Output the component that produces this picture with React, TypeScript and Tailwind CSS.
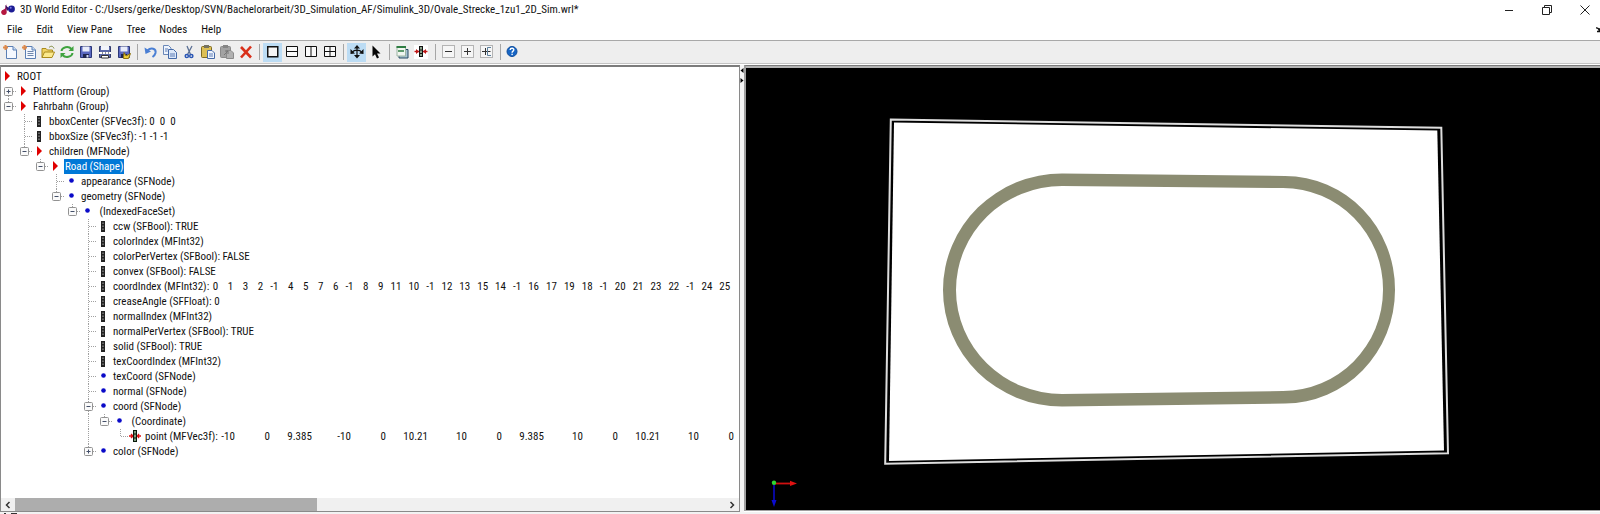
import React, { useState } from 'react';
import clsx from 'clsx';

type IconKind = 'node' | 'slot' | 'field' | 'event';

interface TreeNode {
  label: string;
  icon: IconKind;
  open?: boolean;
  indices?: number[];
  points?: number[];
  children?: TreeNode[];
}

const COORD_INDEX = [
  0, 1, 3, 2, -1, 4, 5, 7, 6, -1, 8, 9, 11, 10, -1, 12, 13, 15, 14, -1,
  16, 17, 19, 18, -1, 20, 21, 23, 22, -1, 24, 25,
];
const POINTS = [-10, 0, 9.385, -10, 0, 10.21, 10, 0, 9.385, 10, 0, 10.21, 10, 0];

// x, y, z columns of a point list
const pointCols = ['w-[39px]', 'w-[35px]', 'w-[42px]'];

const field = (label: string): TreeNode => ({ label, icon: 'field' });

const scene: TreeNode[] = [
  { label: 'Plattform (Group)', icon: 'node', children: [] },
  {
    label: 'Fahrbahn (Group)',
    icon: 'node',
    open: true,
    children: [
      field('bboxCenter (SFVec3f): 0  0  0'),
      field('bboxSize (SFVec3f): -1 -1 -1'),
      {
        label: 'children (MFNode)',
        icon: 'node',
        open: true,
        children: [
          {
            label: 'Road (Shape)',
            icon: 'node',
            open: true,
            children: [
              { label: 'appearance (SFNode)', icon: 'slot' },
              {
                label: 'geometry (SFNode)',
                icon: 'slot',
                open: true,
                children: [
                  {
                    label: ' (IndexedFaceSet)',
                    icon: 'slot',
                    open: true,
                    children: [
                      field('ccw (SFBool): TRUE'),
                      field('colorIndex (MFInt32)'),
                      field('colorPerVertex (SFBool): FALSE'),
                      field('convex (SFBool): FALSE'),
                      { label: 'coordIndex (MFInt32):', icon: 'field', indices: COORD_INDEX },
                      field('creaseAngle (SFFloat): 0'),
                      field('normalIndex (MFInt32)'),
                      field('normalPerVertex (SFBool): TRUE'),
                      field('solid (SFBool): TRUE'),
                      field('texCoordIndex (MFInt32)'),
                      { label: 'texCoord (SFNode)', icon: 'slot' },
                      { label: 'normal (SFNode)', icon: 'slot' },
                      {
                        label: 'coord (SFNode)',
                        icon: 'slot',
                        open: true,
                        children: [
                          {
                            label: ' (Coordinate)',
                            icon: 'slot',
                            open: true,
                            children: [{ label: 'point (MFVec3f):', icon: 'event', points: POINTS }],
                          },
                        ],
                      },
                      { label: 'color (SFNode)', icon: 'slot', children: [] },
                    ],
                  },
                ],
              },
            ],
          },
        ],
      },
    ],
  },
];

/* ---------- tree ---------- */

const NodeIcon: React.FC<{ kind: IconKind }> = ({ kind }) => (
  <svg width="16" height="15" viewBox="0 0 16 15" className="shrink-0" aria-hidden="true">
    {kind === 'node' && <path d="M5 2 L10 7 L5 12 Z" fill="#e00000" />}
    {kind === 'slot' && <circle cx="7.5" cy="6.5" r="2.3" fill="#0a0ac8" />}
    {kind === 'field' && (
      <>
        <rect x="5" y="2" width="4" height="11" fill="#222" />
        <path d="M7 3.5 V12" stroke="#aaa" strokeDasharray="1.5 1.5" />
      </>
    )}
    {kind === 'event' && (
      <>
        <path d="M1 7 H13 M3 5 L5 7 L3 9 M11 5 L9.5 7 L11 9" stroke="#d11" strokeWidth="1.3" fill="none" />
        <rect x="5.5" y="1.5" width="3" height="11" fill="#7d9a7d" stroke="#0a1a0a" />
        <path d="M5.5 5 H8.5 M5.5 9 H8.5" stroke="#0a1a0a" />
      </>
    )}
  </svg>
);

// dotted connector for one indent level
const Guide: React.FC<{ up?: boolean; down?: boolean; right?: boolean }> = ({ up, down, right }) => (
  <svg width="16" height="15" viewBox="0 0 16 15" className="shrink-0" aria-hidden="true">
    <g stroke="#a0a0a0" strokeDasharray="1 1" fill="none">
      {up && <path d="M8.5 0 V8" />}
      {down && <path d="M8.5 8 V15" />}
      {right && <path d="M9 7.5 H16" />}
    </g>
  </svg>
);

interface TreeProps {
  guides: boolean[];
  selected: string;
  onSelect: (label: string) => void;
}

interface RowProps extends TreeProps {
  node: TreeNode;
  last: boolean;
  first: boolean;
}

const TreeRow: React.FC<RowProps> = ({ node, guides, last, first, selected, onSelect }) => {
  const [open, setOpen] = useState(!!node.open);
  const isTop = guides.length === 0 && first;

  return (
    <li>
      <div className="flex h-[15px] items-center">
        {guides.map((g, i) => (
          <Guide key={i} up={g} down={g} />
        ))}
        {node.children ? (
          <button type="button" aria-label={open ? 'Collapse' : 'Expand'} onClick={() => setOpen(!open)} className="shrink-0">
            <svg width="16" height="15" viewBox="0 0 16 15" className="block">
              <g stroke="#a0a0a0" strokeDasharray="1 1">
                {!isTop && <path d="M8.5 0 V4" />}
                {!last && <path d="M8.5 12 V15" />}
                <path d="M13 7.5 H16" />
              </g>
              <rect x="4.5" y="3.5" width="8" height="8" rx="1" fill="#fafafa" stroke="#929292" />
              <path d="M6.5 7.5 H10.5" stroke="#44506a" />
              {!open && <path d="M8.5 5.5 V9.5" stroke="#44506a" />}
            </svg>
          </button>
        ) : (
          <Guide up down={!last} right />
        )}
        <NodeIcon kind={node.icon} />
        <button
          type="button"
          onClick={() => onSelect(node.label)}
          className={clsx(
            'h-[15px] shrink-0 whitespace-pre px-px text-left leading-[15px]',
            selected === node.label && 'bg-[#0078d7] text-white',
          )}
        >
          {node.label}
        </button>
        {node.indices && (
          <div className="flex shrink-0 gap-[7px] leading-[15px]">
            {node.indices.map((n, i) => (
              <span key={i} className="min-w-2 text-right">{n}</span>
            ))}
          </div>
        )}
        {node.points && (
          <div className="flex shrink-0 leading-[15px]">
            {node.points.map((n, i) => (
              <span key={i} className={clsx('text-right', i === 0 ? 'w-4' : pointCols[i % 3])}>{n}</span>
            ))}
          </div>
        )}
      </div>
      {open && node.children && (
        <TreeList nodes={node.children} guides={[...guides, !last]} selected={selected} onSelect={onSelect} />
      )}
    </li>
  );
};

const TreeList: React.FC<TreeProps & { nodes: TreeNode[] }> = ({ nodes, guides, selected, onSelect }) => (
  <ul>
    {nodes.map((n, i) => (
      <TreeRow
        key={n.label}
        node={n}
        guides={guides}
        first={i === 0}
        last={i === nodes.length - 1}
        selected={selected}
        onSelect={onSelect}
      />
    ))}
  </ul>
);

/* ---------- toolbar ---------- */

const page = (
  <>
    <path d="M4.5 2.5 H11 L14.5 6 V14.5 H4.5 Z" fill="#f4f8ff" stroke="#5b7fb4" />
    <path d="M11 2.5 V6 H14.5" fill="#c9dbf2" stroke="#5b7fb4" />
    <path d="M1 3.5 H6 M3.5 1 V6" stroke="#e08a4a" strokeWidth="2" />
  </>
);

const floppy = (
  <>
    <path d="M2.5 2.5 H13.5 V13.5 H2.5 Z" fill="#5a68c0" stroke="#2c3777" />
    <rect x="4.5" y="2.5" width="7" height="5" fill="#e8ecfa" />
    <rect x="5" y="10" width="6" height="4" fill="#1f2650" />
    <rect x="8.5" y="11" width="2" height="2.5" fill="#d6dcf5" />
  </>
);

const boxed = (
  <rect x="1.5" y="1.5" width="12" height="12" fill="#f6f6f6" stroke="#b4b4b4" />
);

interface Tool {
  name: string;
  art: React.ReactNode;
  active?: boolean;
}

const toolGroups: Tool[][] = [
  [
    { name: 'New', art: page },
    {
      name: 'New from template',
      art: (
        <>
          {page}
          <path d="M6.5 7.5 H12.5 M6.5 9.5 H12.5 M6.5 11.5 H12.5" stroke="#6f87ac" />
        </>
      ),
    },
    {
      name: 'Open',
      art: (
        <>
          <path d="M2 13.5 V4.5 H6 L7.5 6 H12.5 V8" fill="#f0d264" stroke="#a98a1c" />
          <path d="M2 13.5 L4.5 8 H14.5 L12 13.5 Z" fill="#fbe98d" stroke="#a98a1c" />
          <path d="M9 3.5 C11 1.5 13 2 14 4.5" fill="none" stroke="#7d8a3c" />
        </>
      ),
    },
    {
      name: 'Revert',
      art: (
        <>
          <path d="M2.5 7 C3 3 9.5 1.5 12.5 5" fill="none" stroke="#3fa33f" strokeWidth="2" />
          <path d="M13.5 9 C13 13 6.5 14.5 3.5 11" fill="none" stroke="#3fa33f" strokeWidth="2" />
          <path d="M14.5 2 V7 H9.5 Z M1.5 14 V9 H6.5 Z" fill="#3fa33f" />
        </>
      ),
    },
    { name: 'Save', art: floppy },
    {
      name: 'Print',
      art: (
        <>
          <path d="M2.5 2.5 H13.5 V13.5 H2.5 Z" fill="#5a68a8" stroke="#353d6d" />
          <rect x="4" y="2" width="8" height="4" fill="#f2f4fb" />
          <path d="M2 8 H14 V10 H2 Z" fill="#fff" />
          <path d="M4.5 11.5 H11.5 V14 H4.5 Z" fill="#fff" stroke="#333" />
          <path d="M5 9 H6 M8 9 H9 M11 9 H12" stroke="#222" />
        </>
      ),
    },
    {
      name: 'Save as',
      art: (
        <>
          {floppy}
          <path d="M8 8.5 L10 12 L14.5 9.5 L12.5 14.5 H7.5 Z" fill="#f2d13c" stroke="#8e7410" />
        </>
      ),
    },
  ],
  [
    {
      name: 'Undo',
      art: (
        <>
          <path d="M4.5 6.5 C8 3 13.5 4.5 12.5 9 C12 11 11 12 9.5 13" fill="none" stroke="#4a7fd4" strokeWidth="2" />
          <path d="M1.5 3.5 L2.5 10 L8 7.5 Z" fill="#4a7fd4" />
        </>
      ),
    },
    {
      name: 'Copy',
      art: (
        <>
          <path d="M1.5 1.5 H6.5 L9 4 V10.5 H1.5 Z" fill="#eef4fd" stroke="#6a88b8" />
          <path d="M6.5 5.5 H11.5 L14.5 8.5 V14.5 H6.5 Z" fill="#dce8f9" stroke="#456aa8" />
          <path d="M8 10 H13 M8 12 H13 M3 5 H6 M3 7 H5.5" stroke="#5c7db5" />
        </>
      ),
    },
    {
      name: 'Cut',
      art: (
        <>
          <path d="M6 2 L9.5 10.5 M11 2 L6.5 10.5" stroke="#5a6f94" strokeWidth="1.3" />
          <circle cx="5.8" cy="12" r="1.6" fill="none" stroke="#2b57b5" strokeWidth="1.5" />
          <circle cx="10.3" cy="12" r="1.6" fill="none" stroke="#2b57b5" strokeWidth="1.5" />
        </>
      ),
    },
    {
      name: 'Paste',
      art: (
        <>
          <rect x="1.5" y="2.5" width="10" height="11" rx="1" fill="#dcbf55" stroke="#7d6a22" />
          <rect x="4" y="1" width="5" height="3" fill="#75725f" />
          <path d="M7.5 6.5 H12 L14.5 9 V14.5 H7.5 Z" fill="#eef4fd" stroke="#456aa8" />
          <path d="M9 10 H13 M9 12 H13" stroke="#5c7db5" />
        </>
      ),
    },
    {
      name: 'Paste reference',
      art: (
        <>
          <rect x="1.5" y="2.5" width="10" height="11" rx="1" fill="#a2a2a2" stroke="#8a8a8a" />
          <rect x="4" y="1" width="5" height="3" fill="#858585" />
          <path d="M7.5 6.5 H12 L14.5 9 V14.5 H7.5 Z" fill="#b0b0b0" stroke="#8a8a8a" />
          <path d="M5 11 L9 7 M6 7 H9 V10" stroke="#777" fill="none" />
        </>
      ),
    },
    { name: 'Delete', art: <path d="M3 3 L13 13.5 M13 2.5 L3 13.5" stroke="#d9301a" strokeWidth="2.6" /> },
  ],
  [
    { name: 'Single view', active: true, art: <rect x="2.75" y="2.75" width="10" height="10" fill="#f4f4f4" stroke="#111" strokeWidth="1.5" /> },
    {
      name: 'Split horizontally',
      art: <path d="M2.5 2.5 H13.5 V12.5 H2.5 Z M2.5 7.5 H13.5" fill="#fafafa" stroke="#111" />,
    },
    {
      name: 'Split vertically',
      art: <path d="M2.5 2.5 H13.5 V12.5 H2.5 Z M8 2.5 V12.5" fill="#fafafa" stroke="#111" />,
    },
    {
      name: 'Four views',
      art: <path d="M2.5 2.5 H13.5 V12.5 H2.5 Z M8 2.5 V12.5 M2.5 7.5 H13.5" fill="#fafafa" stroke="#111" />,
    },
  ],
  [
    {
      name: 'Navigate',
      active: true,
      art: (
        <>
          <path d="M8 3 V13 M3.5 8 C5 5.5 11 5.5 12.5 8" stroke="#111" fill="none" strokeWidth="1.2" />
          <path d="M8 1 L11 4.5 H5 Z M8 14.5 L11 11 H5 Z M1.5 10 V5 L6 9.5 Z M14.5 10 V5 L10 9.5 Z" fill="#111" />
        </>
      ),
    },
    { name: 'Select', art: <path d="M4.5 1.5 V12.5 L7 10.2 L9 14.5 L11 13.6 L9 9.5 H12.5 Z" fill="#050505" /> },
  ],
  [
    {
      name: 'Library',
      art: (
        <>
          <path d="M4 5.5 H13 V14 H4 Z" fill="#a9c3d2" stroke="#284a63" />
          <path d="M2 2.5 H10.5 V12 H2 Z" fill="#f1f6f0" stroke="#9db5a4" />
          <path d="M1.5 3 H11" stroke="#2f7d43" strokeWidth="2" />
          <path d="M3 7 H9" stroke="#2f7d43" strokeWidth="1.5" />
        </>
      ),
    },
    {
      name: 'Show events',
      art: (
        <>
          <rect x="0" y="1" width="14" height="14" fill="#fff" />
          <path d="M0.5 7.5 H13.5" stroke="#c01818" strokeWidth="1.5" />
          <path d="M2 5 L5 7.5 L2 10 Z M12 5 L9 7.5 L12 10 Z" fill="#c01818" />
          <rect x="5.5" y="2.5" width="3" height="10" fill="#8aa18a" stroke="#111" />
          <path d="M5.5 6 H8.5 M5.5 9.5 H8.5" stroke="#111" />
        </>
      ),
    },
  ],
  [
    {
      name: 'Collapse all',
      art: (
        <>
          {boxed}
          <path d="M4 7.5 H11" stroke="#333" />
        </>
      ),
    },
    {
      name: 'Expand all',
      art: (
        <>
          {boxed}
          <path d="M4 7.5 H11 M7.5 4 V11" stroke="#333" />
        </>
      ),
    },
    {
      name: 'Expand branch',
      art: (
        <>
          {boxed}
          <path d="M3 7.5 H11.5 M6.5 4 V11" stroke="#333" />
          <path d="M8.5 3.5 V11.5 M8.5 3.5 H12 M8.5 11.5 H12" stroke="#5b7f9c" fill="none" />
        </>
      ),
    },
  ],
  [
    {
      name: 'Help topics',
      art: (
        <>
          <circle cx="6" cy="7.5" r="5" fill="#1665c4" stroke="#0d4c9c" />
          <path d="M4.1 6 C4.3 3.6 8.1 3.8 7.8 6 C7.6 7.2 6.1 7.2 6.1 8.8" fill="none" stroke="#fff" strokeWidth="1.4" />
          <rect x="5.4" y="9.7" width="1.4" height="1.4" fill="#fff" />
        </>
      ),
    },
  ],
];

const Toolbar: React.FC = () => (
  <div role="toolbar" className="flex h-6 items-center border-y border-t-[#a8a8a8] border-b-[#c4c4c4] bg-[#eeeeee]">
    {toolGroups.map((group, gi) => (
      <React.Fragment key={gi}>
        {gi > 0 && (
          <div className="flex w-2 justify-center">
            <div className="h-4 w-px bg-[#a6a6a6]" />
          </div>
        )}
        {group.map(tool => (
          <button
            key={tool.name}
            type="button"
            aria-label={tool.name}
            className={clsx('flex h-[19px] w-[19px] items-center justify-center', tool.active && 'bg-[#bcdcf4]')}
          >
            <svg width="16" height="16" viewBox="0 0 16 16">
              {tool.art}
            </svg>
          </button>
        ))}
      </React.Fragment>
    ))}
  </div>
);

/* ---------- viewport ---------- */

const Viewport: React.FC = () => (
  <svg viewBox="746 68 854 442" className="absolute inset-0 block size-full" role="img" aria-label="Scene">
    <path d="M890.8 119.6 L1441.3 127.8 L1448 453.2 L885.2 463.8 Z" fill="none" stroke="#dedede" strokeWidth="2" />
    <path d="M894 122.5 L1437.3 130.6 L1444 450.5 L889 461 Z" fill="#ffffff" />
    <path
      fillRule="evenodd"
      fill="#8b8c72"
      d="M1062 173.5 L1285 176 A110 113.5 0 0 1 1395 290 A110 113.5 0 0 1 1285 403.5 L1062 406.5 A119 116.5 0 0 1 943 290 A119 116.5 0 0 1 1062 173.5 Z
         M1062 186 L1283 188 A100 101 0 0 1 1383 290 A100 101 0 0 1 1283 391 L1062 394 A106 104 0 0 1 956 290 A106 104 0 0 1 1062 186 Z"
    />
    <path d="M774 483 V502" stroke="#0a0ad0" strokeWidth="1.5" />
    <path d="M771.5 500 H776.5 L774 507 Z" fill="#0a0ad0" />
    <path d="M775 483.5 H792" stroke="#d01010" strokeWidth="1.8" />
    <path d="M790 480.8 L797 483.5 L790 486 Z" fill="#e01212" />
    <circle cx="774" cy="482.7" r="2.2" fill="#30d830" />
  </svg>
);

const menus = ['File', 'Edit', 'View Pane', 'Tree', 'Nodes', 'Help'];

const App: React.FC = () => {
  const [selected, setSelected] = useState('Road (Shape)');

  return (
    <div className="flex h-screen flex-col overflow-hidden bg-white font-['Roboto_Condensed','Roboto','Noto_Sans',sans-serif] text-[11px] text-[#111]">
      <header className="flex h-5 items-center justify-between">
        <div className="flex items-center gap-1">
          <svg width="16" height="14" viewBox="0 0 16 14" aria-hidden="true">
            <path d="M6.5 1 V8 C6.5 12 1.5 12.5 1.5 9 C1.5 6.5 4.5 7 5 5.5 Z" fill="#a3124e" />
            <circle cx="4" cy="9.3" r="2.6" fill="#b5173f" />
            <path d="M5 2 L9.5 5.5 L7 8 Z" fill="#3a1464" />
            <circle cx="11.5" cy="6" r="3.4" fill="#1b1b94" />
            <circle cx="10.7" cy="4.8" r="1" fill="#7a7ade" />
          </svg>
          <h1>
            3D World Editor - C:/Users/gerke/Desktop/SVN/Bachelorarbeit/3D_Simulation_AF/Simulink_3D/Ovale_Strecke_1zu1_2D_Sim.wrl*
          </h1>
        </div>
        <div className="flex gap-7 pr-[10px]">
          <button type="button" aria-label="Minimize">
            <svg width="10" height="10" viewBox="0 0 10 10"><path d="M1 5.5 H9" stroke="#222" /></svg>
          </button>
          <button type="button" aria-label="Restore">
            <svg width="10" height="10" viewBox="0 0 10 10" fill="none" stroke="#222">
              <path d="M0.5 2.5 H7.5 V9.5 H0.5 Z M2.5 2.5 V0.5 H9.5 V7.5 H7.5" />
            </svg>
          </button>
          <button type="button" aria-label="Close">
            <svg width="10" height="10" viewBox="0 0 10 10"><path d="M0.5 0.5 L9.5 9.5 M9.5 0.5 L0.5 9.5" stroke="#222" /></svg>
          </button>
        </div>
      </header>

      <nav className="flex h-5 items-center justify-between">
        <div className="flex gap-[14px] pl-[7px]">
          {menus.map(m => (
            <button key={m} type="button">{m}</button>
          ))}
        </div>
        <svg width="4" height="6" viewBox="0 0 4 6" aria-hidden="true">
          <path d="M0 1 C2 0.5 3 2 3.5 4 M1 4.5 H4 M4 1 V5" stroke="#111" strokeWidth="1.4" fill="none" />
        </svg>
      </nav>

      <Toolbar />

      <main className="mt-px flex min-h-0 flex-1">
        <section className="flex w-[46.25%] shrink-0 flex-col border-l border-r border-t-2 border-b border-[#8a8a8a] border-t-[#7c7c7c]">
          <div className="-ml-px min-h-0 flex-1 overflow-hidden pt-[2px]">
            <div className="flex h-[15px] items-center">
              <NodeIcon kind="node" />
              <span className="px-px leading-[15px]">ROOT</span>
            </div>
            <TreeList nodes={scene} guides={[]} selected={selected} onSelect={setSelected} />
          </div>
          <div className="flex h-[13px] shrink-0 bg-[#f0f0f0]">
            <button type="button" aria-label="Scroll left" className="flex w-[14px] items-center justify-center">
              <svg width="6" height="8" viewBox="0 0 6 8"><path d="M4.5 1 L1.5 4 L4.5 7" stroke="#333" strokeWidth="1.5" fill="none" /></svg>
            </button>
            <div className="flex-1">
              <div className="h-full w-[42.5%] bg-[#adadad]" />
            </div>
            <button type="button" aria-label="Scroll right" className="flex w-[14px] items-center justify-center">
              <svg width="6" height="8" viewBox="0 0 6 8"><path d="M1.5 1 L4.5 4 L1.5 7" stroke="#333" strokeWidth="1.5" fill="none" /></svg>
            </button>
          </div>
        </section>

        <div className="flex w-1 shrink-0 flex-col items-center gap-[5px] bg-[#f4f4f4] pt-[3px]">
          <svg width="4" height="5" viewBox="0 0 4 5"><path d="M3.5 0 V5 L0.5 2.5 Z" fill="#000" /></svg>
          <svg width="4" height="5" viewBox="0 0 4 5"><path d="M0.5 0 V5 L3.5 2.5 Z" fill="#000" /></svg>
        </div>

        <section className="mb-px flex min-w-0 flex-1 border-l-2 border-t border-b border-[#a0a0a0] border-t-[#7c7c7c]">
          <div className="flex flex-1 border-t-2 border-[#b4b4b4] bg-black">
            <div className="relative flex-1 overflow-hidden">
              <Viewport />
            </div>
          </div>
        </section>
      </main>

      <footer className="h-[2px] shrink-0 bg-[#f2f2f2]">
        <svg width="18" height="2" viewBox="0 0 18 2" className="block" aria-hidden="true">
          <path d="M4 1.5 H6 M11 1.5 H17" stroke="#333" />
        </svg>
      </footer>
    </div>
  );
};

export default App;
